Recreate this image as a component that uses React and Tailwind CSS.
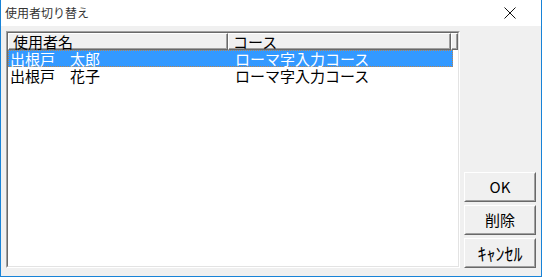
import React from 'react';

const users = [
  { name: '出根戸　太郎', course: 'ローマ字入力コース', selected: true },
  { name: '出根戸　花子', course: 'ローマ字入力コース', selected: false },
];

const font = { fontFamily: '"Noto Sans CJK JP", "Noto Sans", sans-serif' };

const Button = ({ children, size = 'text-[15px]' }) => (
  <div className="h-[30px] w-[72px] border border-t-white border-l-white border-b-[#696969] border-r-[#696969] bg-[#f0f0f0]">
    <div className={`h-full w-full border border-t-[#f0f0f0] border-l-[#f0f0f0] border-b-[#a0a0a0] border-r-[#a0a0a0] flex items-center justify-center whitespace-nowrap text-black ${size}`}>
      {children}
    </div>
  </div>
);

const HeaderCell = ({ width, children }) => (
  <div
    className={`${width} h-[17px] border border-t-white border-l-white border-b-[#696969] border-r-[#696969] bg-[#f0f0f0]`}
  >
    <div className="h-full border-b border-r border-b-[#a0a0a0] border-r-[#a0a0a0] pl-[4px] text-[15px] leading-[15px] text-black">
      {children}
    </div>
  </div>
);

export default function App() {
  return (
    <div className="w-[542px] h-[277px] flex flex-col border-l border-r border-b border-[#1883d7] bg-[#f0f0f0]" style={font}>
      {/* title bar */}
      <div className="h-[26px] bg-white flex items-center justify-between pl-[4px] pr-[25px]">
        <span className="text-[12px] text-[#333]">使用者切り替え</span>
        <svg width="12" height="12" viewBox="0 0 12 12">
          <path d="M0.5 0.5 L11.5 11.5 M11.5 0.5 L0.5 11.5" stroke="#111" strokeWidth="1" />
        </svg>
      </div>

      {/* body */}
      <div className="flex-1 flex pt-[5px] pl-[5px] pr-[4px] pb-[8px] gap-[4px]">
        <div className="w-[454px] h-full border border-t-[#a0a0a0] border-l-[#a0a0a0] border-b-white border-r-white">
          <div className="h-full border border-t-[#696969] border-l-[#696969] border-b-[#e3e3e3] border-r-[#e3e3e3] bg-white flex flex-col">
            <div className="flex">
              <HeaderCell width="w-[221px]">使用者名</HeaderCell>
              <HeaderCell width="w-[224px]">コース</HeaderCell>
              <HeaderCell width="flex-1" />
            </div>
            <div className="flex flex-col">
              {users.map((u) => (
                <div
                  key={u.name}
                  className={`w-[445px] h-[17px] flex text-[15px] leading-[15px] border ${
                    u.selected ? 'bg-[#3399ff] text-white border-dotted border-[#b9844f]' : 'text-black border-transparent'
                  }`}
                >
                  <div className="w-[220px] pl-[1px]">{u.name}</div>
                  <div className="flex-1 pl-[6px]">{u.course}</div>
                </div>
              ))}
            </div>
          </div>
        </div>

        <div className="flex flex-col justify-end gap-[3px]">
          <Button>OK</Button>
          <Button>削除</Button>
          <Button size="text-[18px]">ｷｬﾝｾﾙ</Button>
        </div>
      </div>
    </div>
  );
}
